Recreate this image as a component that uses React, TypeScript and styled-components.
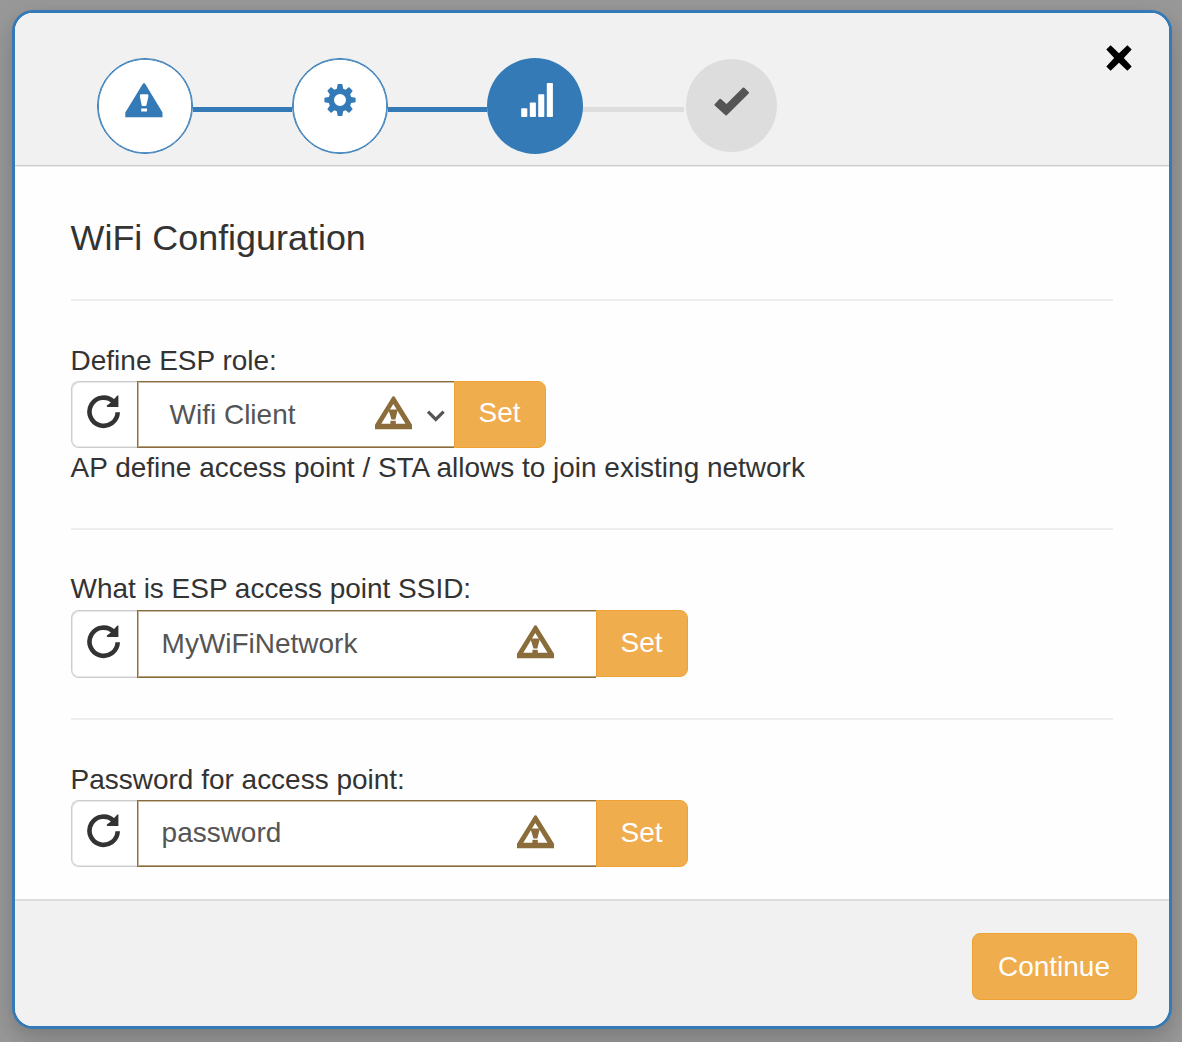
import React from 'react';
import styled, { createGlobalStyle, css } from 'styled-components';

const Global = createGlobalStyle`
  * { box-sizing: border-box; }
  html, body { margin: 0; height: 100%; overflow: hidden; }
  body {
    background: #999;
    color: #333;
    font-family: "Liberation Sans", Arial, sans-serif;
    font-size: 27.97px;
  }
`;

const Backdrop = styled.div`
  width: 1182px;
  height: 1042px;
  padding: 10px 11px 13px 12px;
  background: #999;
  overflow: hidden;
`;

const Dialog = styled.section`
  height: 1019px;
  width: 1160px;
  display: flex;
  flex-direction: column;
  border: 3px solid #337ab7;
  border-radius: 21px;
  background: #fefefe;
  overflow: hidden;
  box-shadow: 0 8px 16px rgba(0, 0, 0, 0.1), 0 12px 40px rgba(0, 0, 0, 0.12);
`;

const Header = styled.header`
  flex: none;
  height: 153px;
  display: flex;
  justify-content: space-between;
  align-items: flex-start;
  padding: 32px 37px 0 82px;
  background: #f1f1f1;
  border-bottom: 1px solid #ccc;
  box-shadow: 0 1px 0 #e9e9e9;
`;

const Steps = styled.ol`
  display: flex;
  align-items: center;
  height: 96px;
  margin: 13px 0 0;
  padding: 0;
  list-style: none;
`;

type StepState = 'done' | 'active' | 'disabled';

const stepLooks = {
  done: css`width: 96px; height: 96px; background: #fff; color: #337ab7; border: 1px solid #337ab7; box-shadow: inset 0 0 0 0.8px #337ab7;`,
  active: css`width: 96px; height: 96px; background: #337ab7; color: #fff;`,
  disabled: css`width: 91px; height: 93px; margin: 0 0 1px 2px; background: #ddd; color: #555;`,
};

const Step = styled.li<{ $state: StepState }>`
  display: flex;
  justify-content: center;
  align-items: center;
  padding-bottom: 12px;
  border-radius: 50%;
  ${(p) => stepLooks[p.$state]}
`;

const Connector = styled.li<{ $off?: boolean }>`
  width: ${(p) => (p.$off ? 101 : 99)}px;
  height: 5px;
  margin-top: 7px;
  background: ${(p) => (p.$off ? '#ddd' : '#337ab7')};
`;

const CloseButton = styled.button`
  display: flex;
  padding: 0;
  border: 0;
  background: none;
  color: #000;
`;

const Body = styled.main`
  flex: 1;
  padding: 50px 56px 0 55.6px;
`;

const Title = styled.h1`
  margin: 0 0 39px;
  font-size: 35.9px;
  font-weight: 400;
  line-height: 44px;
`;

const Rule = styled.hr<{ $top?: number; $bottom?: number }>`
  height: 2px;
  margin: ${(p) => p.$top ?? 0}px 0 ${(p) => p.$bottom ?? 40}px;
  border: 0;
  background: #eee;
`;

const Line = styled.div<{ $h: number }>`
  height: ${(p) => p.$h}px;
  line-height: 39px;
  white-space: nowrap;
`;

const Group = styled.div<{ $h: number }>`
  display: flex;
  height: ${(p) => p.$h}px;
`;

const RefreshButton = styled.button`
  width: 66px;
  display: flex;
  align-items: center;
  justify-content: center;
  padding: 0 1px 5px 0;
  border: 1px solid #ccc;
  border-right: 0;
  border-radius: 8px 0 0 8px;
  background: #fff;
  box-shadow: inset 1px 1px 0 #e8e8e8, inset 0 -1px 0 #e8e8e8;
  color: #333;
`;

const Field = styled.div<{ $w: number; $select?: boolean }>`
  width: ${(p) => p.$w}px;
  display: flex;
  align-items: center;
  padding: 0 ${(p) => (p.$select ? 8 : 42)}px 0 ${(p) => (p.$select ? 32 : 24)}px;
  border: 1px solid #8a6d3b;
  border-right: 0;
  background: #fff;
  box-shadow: inset 1px 0 0 #cabb9f, inset 0 1px 0 #c9bda8, inset 0 -1px 0 #b5a17d;
  color: #555;
`;

const Value = styled.span<{ $select?: boolean }>`
  flex: 1;
  padding-bottom: ${(p) => (p.$select ? 0 : 1)}px;
`;

const SetButton = styled.button<{ $select?: boolean }>`
  width: 92px;
  height: 67px;
  padding: ${(p) => (p.$select ? '0 0 4px' : '0 0 2px')};
  border: 1px solid #eea236;
  border-radius: 0 8px 8px 0;
  background: #f0ad4e;
  color: #fff;
  font: inherit;
`;

const Footer = styled.footer`
  flex: none;
  height: 127px;
  display: flex;
  justify-content: flex-end;
  align-items: flex-start;
  padding: 32px 32px 0;
  border-top: 2px solid #ddd;
  background: #f1f1f1;
`;

const ContinueButton = styled.button`
  width: 165px;
  height: 67px;
  padding: 0 1px 0 0;
  border: 1px solid #eea236;
  border-radius: 8px;
  background: #f0ad4e;
  color: #fff;
  font: inherit;
`;

const FieldIcon = styled.svg<{ $gap?: number }>`
  flex: none;
  display: block;
  margin-bottom: 4px;
  margin-right: ${(p) => p.$gap ?? 0}px;
`;

const WarningSolid = () => (
  <svg width="40" height="35" viewBox="0 0 40 35" fill="currentColor">
    <path
      fillRule="evenodd"
      d="M18 .6Q19 -.2 20 .6L37.5 29.5V34.2H.3V29.5ZM15 12.3V14L16.8 23H21.2L23.3 14V12.3Q23.3 11.3 22.3 11.3H16Q15 11.3 15 12.3ZM16.2 25.5V28.5H22V25.5Z"
    />
  </svg>
);

const Gear = () => (
  <svg width="32" height="32" viewBox="-16 -16 32 32" fill="currentColor">
    <path
      fillRule="evenodd"
      d="M-2.3-16H2.3L3.2-11.2L5.6-10.2L9-12.9L12.7-9.2L10.2-5.6L11.2-3.1L15.6-2.2V2.2L11.2 3.1L10.2 5.6L12.7 9.2L9 12.9L5.6 10.2L3.2 11.2L2.3 16H-2.3L-3.2 11.2L-5.6 10.2L-9 12.9L-12.7 9.2L-10.2 5.6L-11.2 3.1L-15.6 2.2V-2.2L-11.2-3.1L-10.2-5.6L-12.7-9.2L-9-12.9L-5.6-10.2L-3.2-11.2ZM0-6A6 6 0 1 0 0 6A6 6 0 1 0 0-6Z"
    />
  </svg>
);

const Signal = () => (
  <svg width="36" height="34" viewBox="-4 0 36 34" fill="currentColor">
    <rect x="0.2" y="25.3" width="6.1" height="8.7" rx=".8" />
    <rect x="8.8" y="19.5" width="6.1" height="14.5" rx=".8" />
    <rect x="17.2" y="11.2" width="6.1" height="22.8" rx=".8" />
    <rect x="25.8" y="0" width="6.1" height="34" rx=".8" />
  </svg>
);

const CheckIcon = styled.svg`
  flex: none;
  margin: 0 0 -4px 1px;
`;

const Check = () => (
  <CheckIcon width="36" height="29" viewBox="0 0 36 29" fill="currentColor">
    <path d="M.7 17.2L5.5 12.1Q6.2 11.4 6.9 12.1L12.5 17L28.8.8Q29.5 0 30.3.8L34.7 5Q35.4 5.8 34.7 6.6L13 28.1Q12.1 29 11.2 28.1L.7 18.4Q0 17.8.7 17.2Z" />
  </CheckIcon>
);

const Cross = () => (
  <svg width="26" height="26" viewBox="0 0 26 26" fill="currentColor">
    <path d="M4.6.3L13 8.2L21.4.3L25.7 4.6L17.8 13L25.7 21.4L21.4 25.7L13 17.8L4.6 25.7L.3 21.4L8.2 13L.3 4.6Z" />
  </svg>
);

const Refresh = () => (
  <svg width="34" height="34" viewBox="0 0 34 34">
    <path d="M26.6 6.8A14.1 14.1 0 1 0 30.7 17.2" fill="none" stroke="currentColor" strokeWidth="4.6" />
    <path d="M31.4.4V11.9H20.2L19.6 10.8L23.8 7.4L26.6 4.6L30.4.4Z" fill="currentColor" />
  </svg>
);

const Warning = ({ gap }: { gap?: number }) => (
  <FieldIcon $gap={gap} width="37" height="34" viewBox="0 0 37 34" fill="#8a6d3b">
    <path
      fillRule="evenodd"
      d="M17.5.5Q18.5 0 19.5.5L37 28.7V33.3H0V28.7ZM18.3 8L6.3 27.8H30.5Z"
    />
    <path d="M13.8 13.5H22.5V15L20.4 23.5H16.5L13.8 15Z" />
    <rect x="15.4" y="24.8" width="5.4" height="4" />
  </FieldIcon>
);

const ChevronIcon = styled.svg`
  flex: none;
  margin-bottom: -3px;
`;

const Chevron = () => (
  <ChevronIcon width="20" height="14" viewBox="0 0 20 14">
    <path d="M2 2.7L9.8 10.4L17.6 2.7" fill="none" stroke="#555" strokeWidth="3.2" />
  </ChevronIcon>
);

interface SettingProps {
  label: string;
  value: string;
  height: number;
  labelHeight: number;
  select?: boolean;
}

const Setting = ({ label, value, height, labelHeight, select }: SettingProps) => (
  <>
    <Line $h={labelHeight}>{label}</Line>
    <Group $h={height}>
      <RefreshButton aria-label="Refresh"><Refresh /></RefreshButton>
      <Field $w={select ? 317 : 459} $select={select}>
        <Value $select={select}>{value}</Value>
        <Warning gap={select ? 14 : 0} />
        {select && <Chevron />}
      </Field>
      <SetButton $select={select}>Set</SetButton>
    </Group>
  </>
);

export default function App() {
  return (
    <>
      <Global />
      <Backdrop>
        <Dialog>
          <Header>
            <Steps>
              <Step $state="done"><WarningSolid /></Step>
              <Connector />
              <Step $state="done"><Gear /></Step>
              <Connector />
              <Step $state="active"><Signal /></Step>
              <Connector $off />
              <Step $state="disabled"><Check /></Step>
            </Steps>
            <CloseButton aria-label="Close"><Cross /></CloseButton>
          </Header>
          <Body>
            <Title>WiFi Configuration</Title>
            <Rule />
            <Setting label="Define ESP role:" value="Wifi Client" height={67} labelHeight={40} select />
            <Line $h={40}>AP define access point / STA allows to join existing network</Line>
            <Rule $top={40} $bottom={39} />
            <Setting label="What is ESP access point SSID:" value="MyWiFiNetwork" height={68} labelHeight={41} />
            <Rule $top={40} />
            <Setting label="Password for access point:" value="password" height={67} labelHeight={40} />
          </Body>
          <Footer>
            <ContinueButton>Continue</ContinueButton>
          </Footer>
        </Dialog>
      </Backdrop>
    </>
  );
}
